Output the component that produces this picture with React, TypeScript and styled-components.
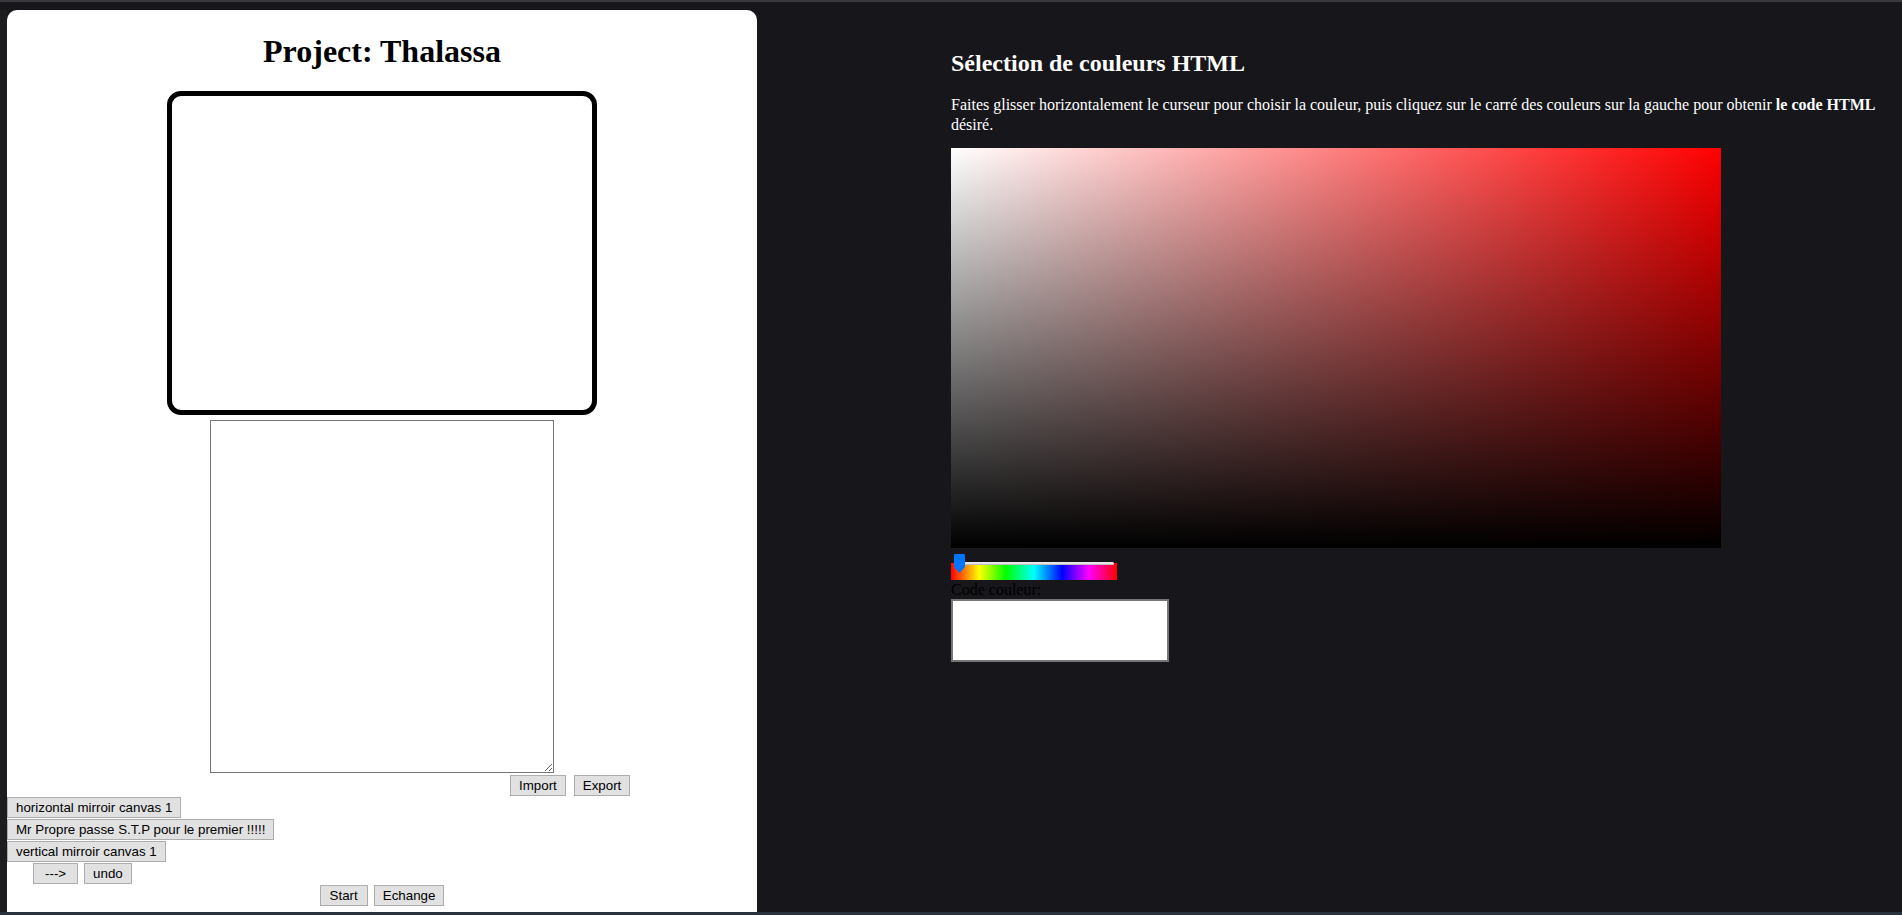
import React from "react";
import styled, { createGlobalStyle } from "styled-components";

const Global = createGlobalStyle`
  html, body { margin: 0; padding: 0; background: #16161b; overflow: hidden; }
  * { box-sizing: border-box; }
`;

const Page = styled.div`
  width: 1902px;
  height: 915px;
  display: flex;
  flex-direction: column;
  background: #16161b;
`;

const TopStrip = styled.div`
  height: 10px;
  flex: none;
  border-top: 2px solid #3a3a3c;
  background: #16161b;
`;

const Main = styled.div`
  flex: 1;
  display: flex;
  min-height: 0;
`;

const BottomStrip = styled.div`
  height: 3px;
  flex: none;
  background: #29333f;
`;

const SideStrip = styled.div`
  width: 7px;
  flex: none;
  background: #1d1d20;
`;

const LeftPanel = styled.div`
  width: 750px;
  flex: none;
  background: #ffffff;
  border-radius: 10px 10px 0 0;
  display: flex;
  flex-direction: column;
  font-family: "Liberation Serif", serif;
`;

const Title = styled.h1`
  margin: 23px 0 0;
  font-size: 32px;
  line-height: 37px;
  font-weight: bold;
  text-align: center;
  color: #000;
`;

const DrawBox = styled.div`
  align-self: center;
  margin-top: 21px;
  width: 430px;
  height: 324px;
  border: 5px solid #000;
  border-radius: 14px;
  background: #fff;
`;

const TextArea = styled.textarea`
  align-self: center;
  margin-top: 5px;
  width: 344px;
  height: 353px;
  border: 1px solid #767676;
  resize: both;
  background: #fff;
  outline: none;
`;

const Controls = styled.div`
  margin-top: 2px;
  display: flex;
  flex-direction: column;
  gap: 1px;
`;

const ButtonRow = styled.div<{ $indent?: number; $center?: boolean; $gap?: number }>`
  display: flex;
  height: 21px;
  padding-left: ${(p) => p.$indent ?? 0}px;
  justify-content: ${(p) => (p.$center ? "center" : "flex-start")};
  gap: ${(p) => p.$gap ?? 6}px;
`;

const Btn = styled.button<{ $pad?: number }>`
  height: 21px;
  padding: 0 ${(p) => p.$pad ?? 8}px;
  border: 1px solid #adadad;
  background: #e1e1e1;
  color: #000;
  font-family: "Liberation Sans", Arial, sans-serif;
  font-size: 13.33px;
  line-height: 19px;
  white-space: nowrap;
  cursor: default;
`;

const RightArea = styled.div`
  flex: 1;
  padding: 39px 0 0 194px;
  font-family: "Liberation Serif", serif;
  color: #fff;
`;

const Heading = styled.h2`
  margin: 0;
  font-size: 24px;
  line-height: 28px;
  font-weight: bold;
  color: #fff;
`;

const Intro = styled.p`
  margin: 18px 0 0;
  width: 935px;
  font-size: 16px;
  line-height: 20px;
  color: #fff;
`;

const ColorSquare = styled.div`
  margin-top: 13px;
  width: 770px;
  height: 400px;
  background: linear-gradient(to top, #000 0%, rgba(0, 0, 0, 0) 100%),
    linear-gradient(to right, #fff 0%, #f00 100%);
`;

const SliderWrap = styled.div`
  position: relative;
  margin-top: 6px;
  width: 170px;
  height: 26px;
  padding-top: 9px;
`;

const HueBar = styled.div`
  width: 166px;
  height: 17px;
  background: linear-gradient(
    to right,
    #f00 0%,
    #ff0 17%,
    #0f0 33%,
    #0ff 50%,
    #00f 67%,
    #f0f 83%,
    #f00 100%
  );
`;

const Track = styled.div`
  position: absolute;
  left: 3px;
  top: 8px;
  width: 160px;
  height: 3px;
  background: #e6e6e6;
  border-bottom: 1px solid #bdbdbd;
  border-radius: 2px;
`;

const Thumb = styled.svg`
  position: absolute;
  left: 3px;
  top: 0;
`;

const Label = styled.div`
  font-size: 16px;
  line-height: 19px;
  color: #000;
`;

const CodeBox = styled.div`
  width: 218px;
  height: 63px;
  border: 2px solid #767676;
  background: #fff;
`;

export default function App() {
  return (
    <>
      <Global />
      <Page>
        <TopStrip />
        <Main>
          <SideStrip />
          <LeftPanel>
            <Title>Project: Thalassa</Title>
            <DrawBox />
            <TextArea />
            <Controls>
              <ButtonRow $indent={503} $gap={8}>
                <Btn>Import</Btn>
                <Btn>Export</Btn>
              </ButtonRow>
              <ButtonRow>
                <Btn>horizontal mirroir canvas 1</Btn>
              </ButtonRow>
              <ButtonRow>
                <Btn>Mr Propre passe S.T.P pour le premier !!!!!</Btn>
              </ButtonRow>
              <ButtonRow>
                <Btn>vertical mirroir canvas 1</Btn>
              </ButtonRow>
              <ButtonRow $indent={26}>
                <Btn $pad={11}>---&gt;</Btn>
                <Btn>undo</Btn>
              </ButtonRow>
              <ButtonRow $center $gap={6}>
                <Btn $pad={9}>Start</Btn>
                <Btn>Echange</Btn>
              </ButtonRow>
            </Controls>
          </LeftPanel>
          <RightArea>
            <Heading>Sélection de couleurs HTML</Heading>
            <Intro>
              Faites glisser horizontalement le curseur pour choisir la couleur, puis cliquez sur le
              carré des couleurs sur la gauche pour obtenir <b>le code HTML</b> désiré.
            </Intro>
            <ColorSquare />
            <SliderWrap>
              <HueBar />
              <Track />
              <Thumb width="11" height="19" viewBox="0 0 11 19">
                <path d="M1 0 H10 A1 1 0 0 1 11 1 V13 L5.5 19 L0 13 V1 A1 1 0 0 1 1 0 Z" fill="#0075ff" />
              </Thumb>
            </SliderWrap>
            <Label>Code couleur:</Label>
            <CodeBox />
          </RightArea>
        </Main>
        <BottomStrip />
      </Page>
    </>
  );
}
